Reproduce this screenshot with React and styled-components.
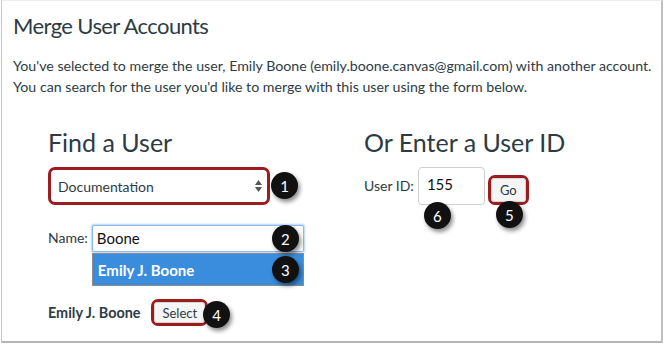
import styled, { createGlobalStyle } from "styled-components";

const GlobalStyle = createGlobalStyle`
  body {
    margin: 0;
    background: #ffffff;
    font-family: Lato, "Liberation Sans", sans-serif;
    color: #2d3b45;
  }
`;

const Frame = styled.div`
  box-sizing: border-box;
  width: 662px;
  height: 343px;
  margin-left: 1px;
  border: 1px solid #c8c8c8;
  border-top-color: #ececec;
  border-bottom: 2px solid #b5b5b5;
  border-right: 2px solid #c0c0c0;
  padding: 10px 11px 0;
`;

const Title = styled.h1`
  margin: 0;
  font-size: 22px;
  letter-spacing: -0.6px;
  font-weight: 400;
  line-height: 30px;
`;

const Intro = styled.p`
  margin: 14px 0 0;
  font-size: 14.2px;
  line-height: 21px;
  white-space: nowrap;
`;

const Columns = styled.div`
  display: grid;
  grid-template-columns: 316px 1fr;
  padding-left: 35px;
  margin-top: 30px;
`;

const Column = styled.div`
  display: flex;
  flex-direction: column;
  align-items: flex-start;
`;

const Heading = styled.h2`
  margin: 0 0 10px;
  font-size: 25px;
  font-weight: 400;
  line-height: 30px;
`;

const Highlight = styled.div`
  position: relative;
  border: 3px solid #9b1d1d;
  border-radius: 7px;
  background: #fff;
`;

const SelectBox = styled.div`
  box-sizing: border-box;
  width: 216px;
  height: 32px;
  display: flex;
  align-items: center;
  justify-content: space-between;
  padding: 0 5px 0 7px;
  font-size: 14px;
`;

const Arrows = styled.span`
  display: flex;
  flex-direction: column;
  gap: 2px;
`;

const Badge = styled.span`
  position: absolute;
  width: 27px;
  height: 27px;
  border-radius: 50%;
  background: #111;
  color: #fff;
  font-size: 15px;
  font-weight: 400;
  display: flex;
  align-items: center;
  justify-content: center;
  box-shadow: 2px 3px 4px rgba(0, 0, 0, 0.45);
  ${(p) => p.$left !== undefined && `left: ${p.$left};`}
  ${(p) => p.$right !== undefined && `right: ${p.$right};`}
  top: ${(p) => p.$top};
  z-index: 2;
`;

const NameRow = styled.div`
  display: flex;
  align-items: flex-start;
  margin-top: 20px;
`;

const Label = styled.label`
  font-size: 14px;
  line-height: 26px;
  margin-right: ${(p) => p.$gap || "4px"};
`;

const Stack = styled.div`
  display: flex;
  flex-direction: column;
`;

const Field = styled.div`
  position: relative;
  box-sizing: border-box;
  width: ${(p) => p.$w};
  height: ${(p) => p.$h};
  border: 1px solid ${(p) => (p.$focus ? "#8bbaf0" : "#cfcfcf")};
  box-shadow: ${(p) => (p.$focus ? "0 0 2px 1px #b6d4f6" : "none")};
  border-radius: ${(p) => (p.$focus ? "2px" : "4px")};
  padding: ${(p) => p.$pad};
  font-size: 15px;
  color: #111;
  background: #fff;
`;

const Menu = styled.div`
  position: relative;
  box-sizing: border-box;
  width: 212px;
  height: 33px;
  margin-top: 1px;
  background: #3a8ddd;
  border: 1px solid #8c8c8c;
  color: #fff;
  font-weight: 700;
  font-size: 15px;
  display: flex;
  align-items: center;
  padding-left: 5px;
`;

const ResultRow = styled.div`
  display: flex;
  align-items: center;
  margin-top: 13px;
`;

const ResultName = styled.span`
  font-weight: 700;
  font-size: 14.4px;
  white-space: nowrap;
  margin-right: 11px;
`;

const Button = styled.span`
  display: flex;
  align-items: center;
  justify-content: center;
  box-sizing: border-box;
  height: ${(p) => p.$h};
  padding: 0 ${(p) => p.$px};
  background: #f5f5f5;
  border: 1px solid #d4d4d4;
  border-radius: 3px;
  font-size: 13px;
  color: #2d3b45;
`;

const IdRow = styled.div`
  display: flex;
  align-items: flex-end;
  gap: 3px;
`;

const IdLabel = styled(Label)`
  align-self: center;
  line-height: 20px;
`;

export default function App() {
  return (
    <>
      <GlobalStyle />
      <Frame>
        <Title>Merge User Accounts</Title>
        <Intro>
          You've selected to merge the user, Emily Boone
          (emily.boone.canvas@gmail.com) with another account.
          <br />
          You can search for the user you'd like to merge with this user using
          the form below.
        </Intro>
        <Columns>
          <Column>
            <Heading>Find a User</Heading>
            <Highlight>
              <SelectBox>
                Documentation
                <Arrows>
                  <svg width="7" height="5" viewBox="0 0 7 5">
                    <path d="M3.5 0L7 5H0z" fill="#555" />
                  </svg>
                  <svg width="7" height="5" viewBox="0 0 7 5">
                    <path d="M0 0h7L3.5 5z" fill="#555" />
                  </svg>
                </Arrows>
              </SelectBox>
              <Badge $left="calc(100% + 4px)" $top="2px">1</Badge>
            </Highlight>
            <NameRow>
              <Label>Name:</Label>
              <Stack>
                <Field $w="212px" $h="27px" $pad="3px 4px" $focus>
                  Boone
                  <Badge $right="4px" $top="-1px">2</Badge>
                </Field>
                <Menu>
                  Emily J. Boone
                  <Badge $right="4px" $top="2px">3</Badge>
                </Menu>
              </Stack>
            </NameRow>
            <ResultRow>
              <ResultName>Emily J. Boone</ResultName>
              <Highlight>
                <Button $h="21px" $px="7px">Select</Button>
                <Badge $left="calc(100% - 2px)" $top="-1px">4</Badge>
              </Highlight>
            </ResultRow>
          </Column>
          <Column>
            <Heading>Or Enter a User ID</Heading>
            <IdRow>
              <IdLabel $gap="1px">User ID:</IdLabel>
              <Field $w="67px" $h="38px" $pad="7px 8px">
                155
                <Badge $left="5px" $top="calc(100% - 2px)">6</Badge>
              </Field>
              <Highlight>
                <Button $h="24px" $px="8px">Go</Button>
                <Badge $left="5px" $top="calc(100% - 1px)">5</Badge>
              </Highlight>
            </IdRow>
          </Column>
        </Columns>
      </Frame>
    </>
  );
}
